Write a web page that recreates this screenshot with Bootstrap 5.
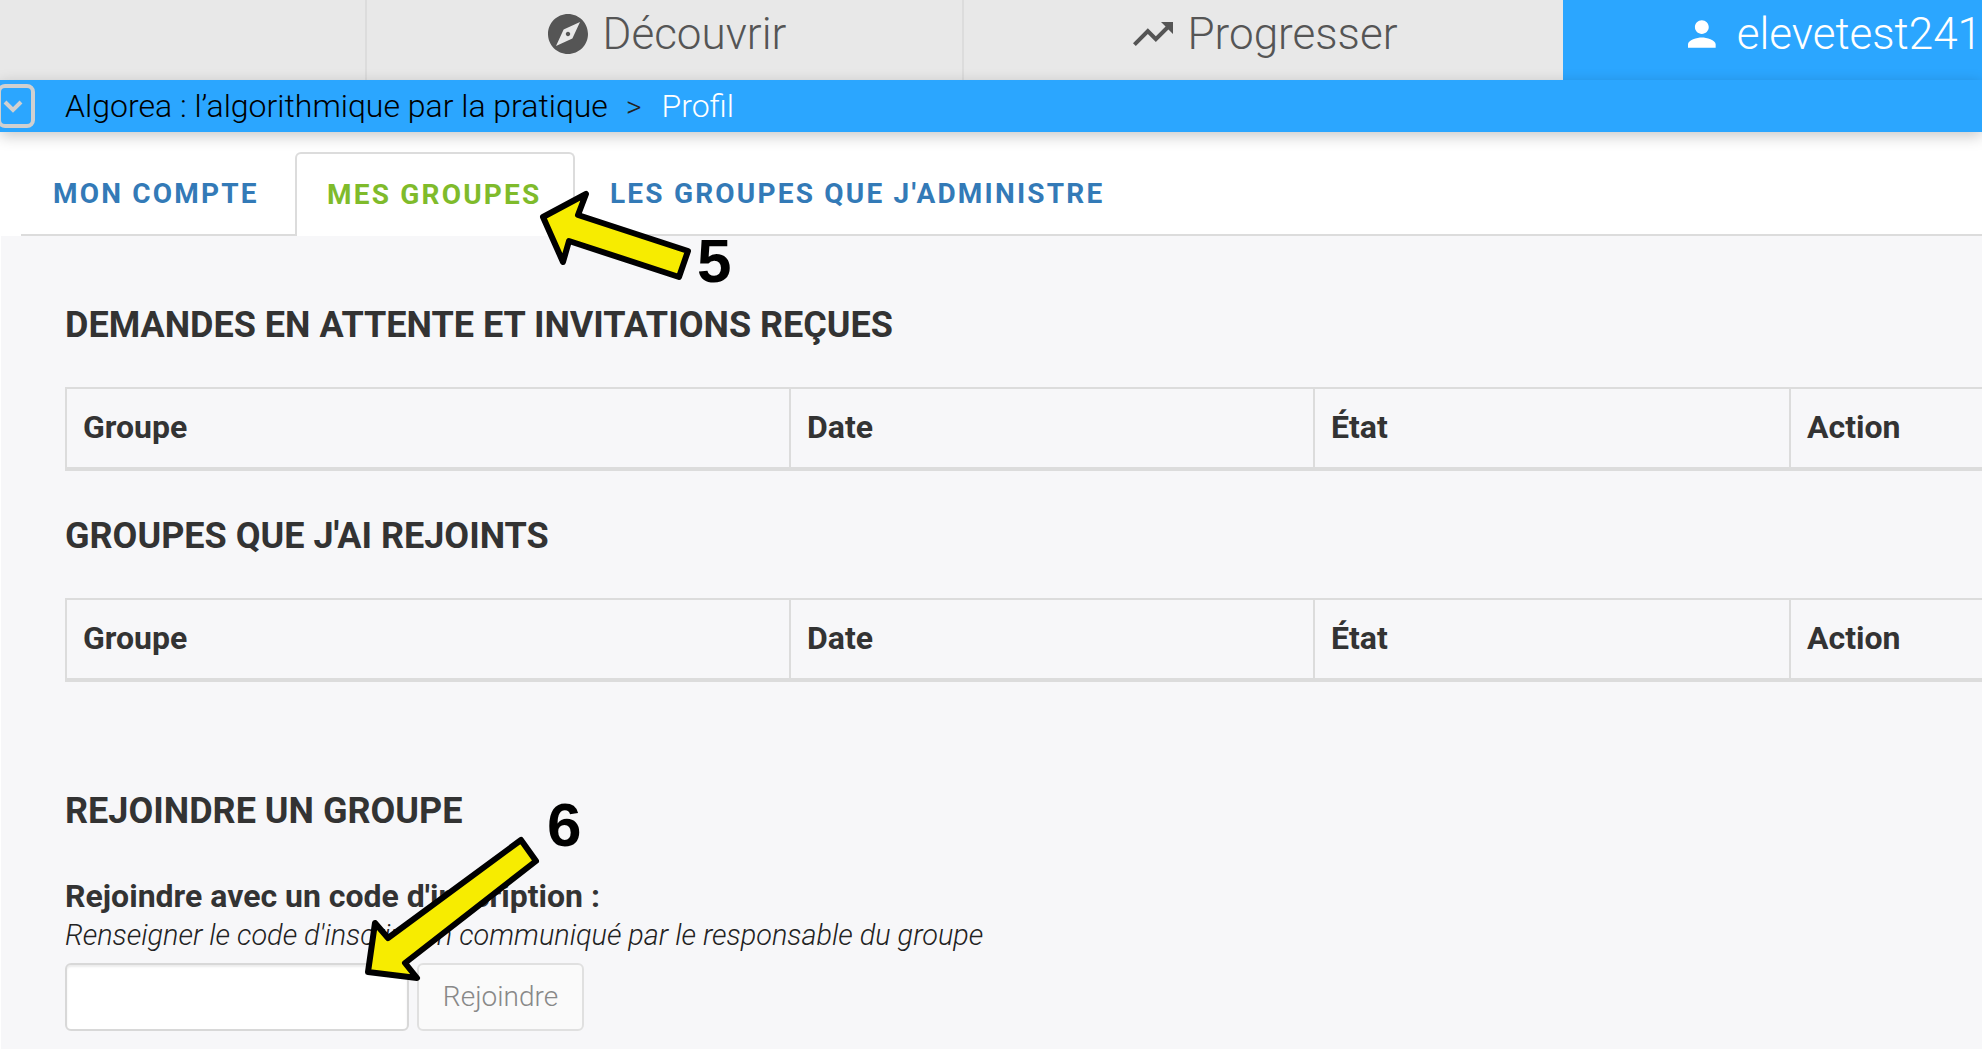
<!DOCTYPE html>
<html lang="fr">
<head>
    <meta charset="UTF-8">
    <title>Profil</title>
    <link href="https://cdn.jsdelivr.net/npm/bootstrap@5.3.0/dist/css/bootstrap.min.css" rel="stylesheet">
    <style>
        body { font-family: Roboto, sans-serif; background: #fff; color: #333; overflow: hidden; height: 1049px; position: relative; }
        .top-bar { height: 80px; background: #e8e8e8; }
        .top-spacer { width: 367px; border-right: 2px solid #dcdcdc; }
        .top-item { width: 597px; border-right: 2px solid #dcdcdc; font-size: 44px; font-weight: 300; color: #555; gap: 15px; padding-bottom: 12px; padding-left: 5px; }
        .top-item.second { width: 599px; border-right: 0; padding-left: 3px; }
        .top-item.user { flex: 1; width: auto; border: 0; background: #2ba6ff; color: #fff; gap: 21px; padding-left: 125px; white-space: nowrap; overflow: hidden; }
        .crumb-bar { height: 52px; background: #2ba6ff; font-size: 32px; font-weight: 300; color: #000; box-shadow: 0 4px 14px rgba(0, 0, 0, .22); position: relative; }
        .crumb-toggle { width: 38px; height: 44px; margin-left: -3px; margin-right: 30px; padding-right: 6px; border: 4px solid #d0d0d0; border-radius: 8px; }
        .crumb-sep { margin: 0 20px 0 18px; font-size: 30px; color: #222; }
        .tabs-row { height: 104px; margin-left: 21px; border-bottom: 2px solid #dcdcdc; }
        .tab-link { font-size: 28px; font-weight: 700; letter-spacing: 2.2px; color: #337ab7; height: 82px; line-height: 79px; text-decoration: none; border: 2px solid transparent; border-bottom: 0; white-space: nowrap; }
        .tab-link.first { padding-left: 30px; width: 274px; }
        .tab-link.on { width: 280px; padding-left: 30px; color: #7fbb2b; background: #fff; border-color: #dcdcdc; border-radius: 6px 6px 0 0; margin-bottom: -2px; height: 84px; line-height: 81px; }
        .tab-link.last { padding-left: 33px; }
        .page-body { background: #f7f7f9; height: 813px; padding-left: 64px; margin-left: 1px; }
        .sec-title { font-size: 36px; font-weight: 700; color: #333; margin: 0; line-height: 42px; text-transform: uppercase; }
        .title-one { padding-top: 68px; }
        .title-two { padding-top: 44px; }
        .title-three { padding-top: 108px; }
        .grp-table { width: 1950px; height: 84px; border: 2px solid #dcdcdc; border-bottom-width: 4px; font-size: 32px; font-weight: 700; }
        .table-one { margin-top: 41px; }
        .table-two { margin-top: 41px; }
        .grp-cell { padding-left: 16px; padding-bottom: 2px; border-right: 2px solid #dcdcdc; }
        .c-a { width: 724px; } .c-b { width: 524px; } .c-c { width: 476px; } .c-d { flex: 1; border-right: 0; }
        .join-label { font-size: 32px; font-weight: 700; line-height: 38px; margin-top: 45px; }
        .join-help { font-size: 28.85px; font-weight: 300; font-style: italic; color: #222; line-height: 38px; margin-top: 1px; }
        .join-row { margin-top: 9px; }
        .join-input { width: 344px; height: 68px; background: #fff; border: 2px solid #d8d8d8; border-radius: 6px; box-shadow: inset 0 2px 2px rgba(0,0,0,.08); }
        .join-btn { width: 167px; height: 68px; background: #fafafa; border: 2px solid #e0e0e0; border-radius: 6px; color: #888; font-size: 28px; font-weight: 300; padding: 0; }
        .arrow-layer { position: absolute; left: 0; top: 0; width: 1982px; height: 1049px; pointer-events: none; }
        .step-num { position: absolute; font-family: "Liberation Sans", sans-serif; font-size: 62px; line-height: 1; font-weight: 700; color: #000; }
        .step-a { left: 697px; top: 230px; }
        .step-b { left: 547px; top: 794px; }
    </style>
</head>
<body>
    <div class="top-bar d-flex">
        <div class="top-spacer"></div>
        <div class="top-item d-flex align-items-center justify-content-center">
            <svg width="40" height="40" viewBox="2 2 20 20"><path fill="#555" d="M12 10.9c-.61 0-1.1.49-1.1 1.1s.49 1.1 1.1 1.1c.61 0 1.1-.49 1.1-1.1s-.49-1.1-1.1-1.1zM12 2C6.48 2 2 6.48 2 12s4.48 10 10 10 10-4.48 10-10S17.52 2 12 2zm2.19 12.19L6 18l3.81-8.19L18 6l-3.81 8.19z"/></svg>
            <span>Découvrir</span>
        </div>
        <div class="top-item second d-flex align-items-center justify-content-center">
            <svg width="40" height="25" viewBox="2 6 20 12.5"><path fill="#555" d="M16 6l2.29 2.29-4.88 4.88-4-4L2 16.59 3.41 18l6-6 4 4 6.3-6.29L22 12V6z"/></svg>
            <span>Progresser</span>
        </div>
        <div class="top-item user d-flex align-items-center">
            <svg width="33" height="32" viewBox="4 4 16 16"><path fill="#fff" d="M12 12c2.21 0 4-1.79 4-4s-1.79-4-4-4-4 1.79-4 4 1.79 4 4 4zm0 2c-2.67 0-8 1.34-8 4v2h16v-2c0-2.66-5.33-4-8-4z"/></svg>
            <span>elevetest241</span>
        </div>
    </div>
    <div class="crumb-bar d-flex align-items-center">
        <div class="crumb-toggle d-flex align-items-center justify-content-center flex-shrink-0">
            <svg width="20" height="14" viewBox="0 0 20 14"><path d="M2 3l8 8 8-8" fill="none" stroke="#d0d0d0" stroke-width="4"/></svg>
        </div>
        <span>Algorea : l’algorithmique par la pratique</span>
        <span class="crumb-sep">&gt;</span>
        <span class="text-white">Profil</span>
    </div>
    <div class="tabs-row d-flex align-items-end">
        <a class="tab-link first" href="#">MON COMPTE</a>
        <a class="tab-link on" href="#">MES GROUPES</a>
        <a class="tab-link last" href="#">LES GROUPES QUE J'ADMINISTRE</a>
    </div>
    <div class="page-body">
        <h2 class="sec-title title-one">Demandes en attente et invitations reçues</h2>
        <div class="grp-table table-one d-flex">
            <div class="grp-cell c-a d-flex align-items-center">Groupe</div>
            <div class="grp-cell c-b d-flex align-items-center">Date</div>
            <div class="grp-cell c-c d-flex align-items-center">État</div>
            <div class="grp-cell c-d d-flex align-items-center">Action</div>
        </div>
        <h2 class="sec-title title-two">Groupes que j'ai rejoints</h2>
        <div class="grp-table table-two d-flex">
            <div class="grp-cell c-a d-flex align-items-center">Groupe</div>
            <div class="grp-cell c-b d-flex align-items-center">Date</div>
            <div class="grp-cell c-c d-flex align-items-center">État</div>
            <div class="grp-cell c-d d-flex align-items-center">Action</div>
        </div>
        <h2 class="sec-title title-three">Rejoindre un groupe</h2>
        <div class="join-label">Rejoindre avec un code d'inscription :</div>
        <div class="join-help">Renseigner le code d'inscription communiqué par le responsable du groupe</div>
        <div class="join-row d-flex gap-2">
            <div class="join-input"></div>
            <button class="join-btn" type="button">Rejoindre</button>
        </div>
    </div>

    <!-- fleches par dessus le contenu -->
    <svg class="arrow-layer" viewBox="0 0 1982 1049">
        <polygon points="543,217 586,194 578,215 688,251 679,277 569,241 563,262" fill="#f7ec00" stroke="#000" stroke-width="6" stroke-linejoin="round"/>
        <polygon points="521,840 536,861 405,963 417,978 368,972 375,923 388,938" fill="#f7ec00" stroke="#000" stroke-width="6" stroke-linejoin="round"/>
    </svg>
    <div class="step-num step-a">5</div>
    <div class="step-num step-b">6</div>
</body>
</html>
